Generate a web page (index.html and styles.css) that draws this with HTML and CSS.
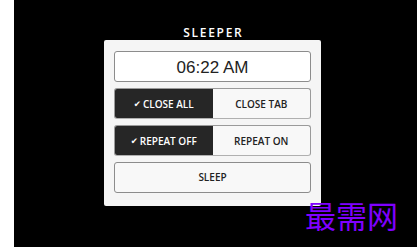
FILE: index.html
```html
<!DOCTYPE html>
<html>
<head>
<meta charset="utf-8">
<title>Sleeper</title>
<link rel="stylesheet" href="styles.css">
</head>
<body>
  <div class="strip"></div>
  <div class="main">
    <div class="title">SLEEPER</div>
    <div class="panel">
      <div class="clock">06:22 AM</div>
      <div class="toggle">
        <div class="opt active"><span class="check">&#10004;</span>CLOSE ALL</div>
        <div class="opt">CLOSE TAB</div>
      </div>
      <div class="toggle">
        <div class="opt active"><span class="check">&#10004;</span>REPEAT OFF</div>
        <div class="opt">REPEAT ON</div>
      </div>
      <div class="sleep">SLEEP</div>
    </div>
  </div>
  <div class="mark">最需网</div>
</body>
</html>
```

FILE: styles.css
```css
body {
  margin: 0;
  height: 247px;
  display: flex;
  background: #000;
  font-family: "Liberation Sans", Arial, sans-serif;
  overflow: hidden;
}
.strip {
  width: 14px;
  background: #fff;
}
.main {
  flex: 1;
  padding: 26px 0 0 90px;
}
.title {
  width: 217px;
  text-align: center;
  color: #fff;
  font-family: "Open Sans", sans-serif;
  font-size: 12px;
  font-weight: 600;
  line-height: 14px;
  letter-spacing: 1.7px;
  text-indent: 1.7px;
}
.panel {
  width: 217px;
  box-sizing: border-box;
  padding: 11px 10px 13px;
  background: #f5f5f5;
  border-radius: 2px;
  display: flex;
  flex-direction: column;
  gap: 6px;
}
.clock {
  height: 31px;
  box-sizing: border-box;
  border: 1px solid #8c8c8c;
  border-radius: 3px;
  background: #fff;
  color: #222;
  font-size: 17px;
  line-height: 29px;
  padding-top: 1px;
  text-align: center;
}
.toggle {
  height: 31px;
  box-sizing: border-box;
  display: flex;
  border: 1px solid #9a9a9a;
  border-bottom-color: #b0b0b0;
  border-radius: 3px;
  overflow: hidden;
  background: #f8f8f8;
}
.opt, .sleep {
  font-family: "Open Sans", sans-serif;
  font-weight: 600;
  font-size: 10px;
  color: #222;
}
.opt {
  flex: 1;
  display: flex;
  align-items: center;
  justify-content: center;
}
.opt.active {
  background: #262626;
  color: #fff;
}
.check {
  font-family: "DejaVu Sans", sans-serif;
  font-size: 8.5px;
  margin-right: 2px;
}
.sleep {
  height: 31px;
  box-sizing: border-box;
  border: 1px solid #8c8c8c;
  border-radius: 3px;
  background: #f8f8f8;
  line-height: 29px;
  text-align: center;
}
.mark {
  position: absolute;
  left: 305px;
  top: 199px;
  font-family: "Noto Sans CJK SC", sans-serif;
  font-size: 31px;
  font-weight: 400;
  line-height: 1;
  color: #7f00ff;
}
```
